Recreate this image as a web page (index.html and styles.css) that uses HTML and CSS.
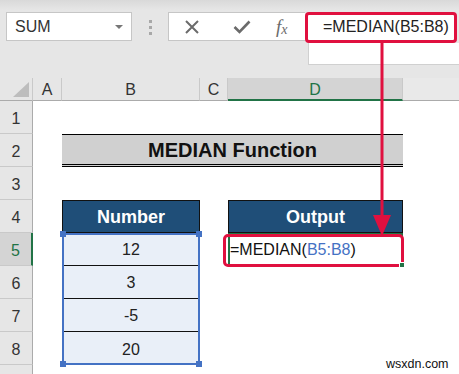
FILE: index.html
```html
<!DOCTYPE html>
<html lang="en">

<head>
    <meta charset="UTF-8" />
    <meta name="viewport" content="width=device-width, initial-scale=1" />
    <title>MEDIAN Function</title>
    <link rel="stylesheet" href="styles.css">
</head>

<body>
    <div class="ribbon">
        <div class="namebox">
            <span>SUM</span>
            <span class="caret"></span>
        </div>
        <div class="grip"><i></i><i></i><i></i></div>
        <div class="fxbox">
            <svg class="icon-x" width="16" height="16" viewBox="0 0 16 16">
                <path d="M2 2 L14 14 M14 2 L2 14" stroke="#6b6b6b" stroke-width="2" fill="none" />
            </svg>
            <svg class="icon-ok" width="18" height="14" viewBox="0 0 18 14">
                <path d="M1.5 7 L6.5 12 L16.5 1.5" stroke="#6b6b6b" stroke-width="2.6" fill="none" />
            </svg>
            <span class="fx">f<sub>x</sub></span>
        </div>
        <div class="formula">
            <div class="formula-text">=MEDIAN(B5:B8)</div>
            <div class="formula-rest"></div>
        </div>
    </div>

    <div class="sheet">
        <!-- column headers -->
        <div class="hd corner"><span class="tri"></span></div>
        <div class="hd col">A</div>
        <div class="hd col">B</div>
        <div class="hd col">C</div>
        <div class="hd col sel-col">D</div>
        <div class="hd col last"></div>

        <!-- row headers -->
        <div class="hd row r1">1</div>
        <div class="hd row r2">2</div>
        <div class="hd row r3">3</div>
        <div class="hd row r4">4</div>
        <div class="hd row r5 sel-row">5</div>
        <div class="hd row r6">6</div>
        <div class="hd row r7">7</div>
        <div class="hd row r8">8</div>
        <div class="hd row r9"></div>

        <!-- content -->
        <div class="title">MEDIAN Function</div>

        <div class="thead b-col">Number</div>
        <div class="thead d-col">Output</div>

        <div class="num r5">12</div>
        <div class="num r6">3</div>
        <div class="num r7">-5</div>
        <div class="num r8 end">20</div>
        <div class="range">
            <span class="handle tl"></span>
            <span class="handle tr"></span>
            <span class="handle bl"></span>
            <span class="handle br"></span>
        </div>

        <div class="active">
            <span class="cell-text">=MEDIAN(<span class="ref">B5:B8</span>)</span>
            <span class="mark"></span>
            <span class="fill"></span>
        </div>
    </div>

    <svg class="arrow" width="30" height="200" viewBox="0 0 30 200">
        <rect x="13.5" y="0" width="3" height="180" fill="#e0103f" />
        <path d="M6 172 L24 172 L15 193 Z" fill="#e0103f" />
    </svg>

    <div class="watermark">wsxdn.com</div>
</body>

</html>
```

FILE: styles.css
```css
/* Reset & base */
* {
    margin: 0;
    padding: 0;
    box-sizing: border-box;
}

html {
    overflow: hidden;
}

body {
    width: 459px;
    height: 374px;
    overflow: hidden;
    background: #fff;
    color: #222;
    font-family: 'Liberation Sans', Arial, sans-serif;
    position: relative;
}

/* Formula bar */
.ribbon {
    height: 78px;
    display: flex;
    align-items: flex-start;
    padding: 12px 0 0 6px;
    background: linear-gradient(#d9d9d9, #e6e6e6 10px);
}

.namebox {
    width: 126px;
    height: 29px;
    background: #fff;
    border: 1px solid #c6c6c6;
    display: flex;
    align-items: center;
    justify-content: space-between;
    padding: 1px 8px 0 8px;
    font-size: 16px;
    color: #333;
}

.caret {
    width: 0;
    height: 0;
    border-left: 4px solid transparent;
    border-right: 4px solid transparent;
    border-top: 4px solid #777;
}

.grip {
    width: 3px;
    margin: 8px 16px 0 17px;
    display: flex;
    flex-direction: column;
    gap: 3px;
}

.grip i {
    display: block;
    width: 3px;
    height: 3px;
    background: #a8a8a8;
}

.fxbox {
    width: 137px;
    height: 29px;
    background: #fff;
    border: 1px solid #c6c6c6;
    border-right: none;
    display: flex;
    align-items: center;
    padding-left: 15px;
}

.icon-ok {
    margin-left: 33px;
}

.fx {
    margin-left: 25px;
    font-family: 'Liberation Serif', serif;
    font-style: italic;
    font-size: 19px;
    color: #6b6b6b;
    line-height: 1;
}

.fx sub {
    font-size: 14px;
    vertical-align: -1px;
}

.formula {
    flex-grow: 1;
    display: flex;
    flex-direction: column;
}

.formula-text {
    height: 31px;
    border: 3px solid #e0103f;
    border-radius: 4px;
    margin-right: 2px;
    background: #fff;
    font-size: 16px;
    color: #222;
    padding: 3px 0 0 15px;
}

.formula-rest {
    height: 22px;
    margin-left: 3px;
    background: #fff;
    border-left: 1px solid #d0d0d0;
    border-bottom: 1px solid #d0d0d0;
}

/* Grid */
.sheet {
    display: grid;
    grid-template-columns: 33px 29px 138px 28px 175px 56px;
    grid-template-rows: 23px repeat(8, 33px) 12px;
}

.r1 { grid-row: 2; }
.r2 { grid-row: 3; }
.r3 { grid-row: 4; }
.r4 { grid-row: 5; }
.r5 { grid-row: 6; }
.r6 { grid-row: 7; }
.r7 { grid-row: 8; }
.r8 { grid-row: 9; }
.r9 { grid-row: 10; }

.hd {
    background: #e6e6e6;
    color: #333;
    font-size: 16px;
    display: flex;
    align-items: center;
    justify-content: center;
}

.col {
    grid-row: 1;
    border-right: 1px solid #c9c9c9;
    border-bottom: 1px solid #ababab;
    padding-top: 2px;
}

.col.last {
    border-right: none;
    background: #e9e9e9;
}

.corner {
    grid-row: 1;
    grid-column: 1;
    border-right: 1px solid #c9c9c9;
    border-bottom: 1px solid #ababab;
    align-items: flex-end;
    justify-content: flex-end;
    padding: 0 3px 3px 0;
}

.tri {
    width: 0;
    height: 0;
    border-left: 16px solid transparent;
    border-bottom: 15px solid #bdbdbd;
}

.row {
    grid-column: 1;
    border-right: 1px solid #ababab;
    border-bottom: 1px solid #c9c9c9;
    padding-top: 4px;
}

.sel-col {
    background: #d4d4d4;
    color: #217346;
    border-bottom: 2px solid #217346;
}

.sel-row {
    background: #d4d4d4;
    color: #217346;
    border-right: 2px solid #217346;
}

/* Cells */
.title {
    grid-column: 3 / 6;
    grid-row: 3;
    background: #d0d0d0;
    border-top: 1px solid #000;
    border-bottom: 3px double #000;
    font-weight: 700;
    font-size: 20px;
    color: #111;
    display: flex;
    align-items: center;
    justify-content: center;
    padding-top: 2px;
}

.thead {
    grid-row: 5;
    background: #1f4e78;
    color: #fff;
    border: 1px solid #111;
    font-weight: 700;
    font-size: 18px;
    display: flex;
    align-items: center;
    justify-content: center;
    padding-top: 2px;
}

.b-col {
    grid-column: 3;
}

.d-col {
    grid-column: 5;
}

.num {
    grid-column: 3;
    background: #e9eff8;
    border-bottom: 1px solid #111;
    font-size: 16px;
    color: #222;
    display: flex;
    align-items: center;
    justify-content: center;
    padding-top: 2px;
}

.num.end {
    border-bottom: none;
}

.range {
    grid-column: 3;
    grid-row: 6 / 10;
    border: 2px solid #4472c4;
    position: relative;
}

.handle {
    position: absolute;
    width: 6px;
    height: 6px;
    background: #4472c4;
}

.handle.tl { left: -4px; top: -4px; }
.handle.tr { right: -4px; top: -4px; }
.handle.bl { left: -4px; bottom: -4px; }
.handle.br { right: -4px; bottom: -4px; }

.active {
    grid-column: 5;
    grid-row: 6;
    border: 2px solid #217346;
    position: relative;
    font-size: 16px;
    color: #111;
    display: flex;
    align-items: center;
    padding-top: 1px;
}

.ref {
    color: #4472c4;
}

.mark {
    position: absolute;
    left: -7px;
    right: -3px;
    top: -1px;
    bottom: -3px;
    border: 3px solid #e0103f;
    border-radius: 5px;
}

.fill {
    position: absolute;
    right: -4px;
    bottom: -4px;
    width: 6px;
    height: 6px;
    background: #217346;
    border: 1px solid #fff;
}

/* Overlays */
.arrow {
    position: absolute;
    left: 367px;
    top: 43px;
}

.watermark {
    position: absolute;
    left: 386px;
    top: 357px;
    font-size: 12.5px;
    color: #111;
}
```
